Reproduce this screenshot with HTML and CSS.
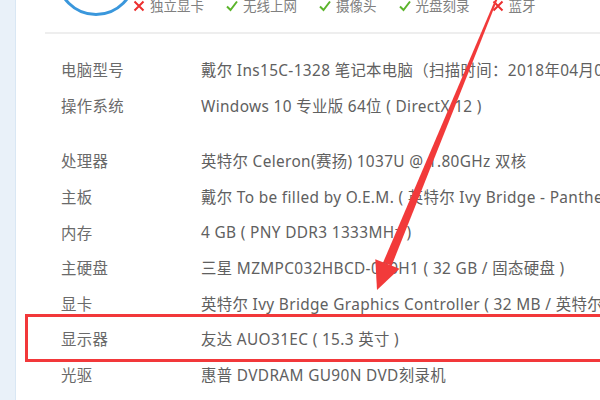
FILE: index.html
```html
<!DOCTYPE html>
<html lang="zh-CN">
<head>
<meta charset="utf-8">
<link rel="stylesheet" href="styles.css">
</head>
<body>
<div class="page">
  <aside class="side"></aside>
  <main class="main">
    <header class="head">
      <div class="logo"></div>
      <ul class="feats">
        <li class="feat"><svg class="ico" viewBox="0 0 12 12"><path d="M1.5 1.5 L10.5 10.5 M10.5 1.5 L1.5 10.5" class="x"/></svg>独立显卡</li>
        <li class="feat"><svg class="ico" viewBox="0 0 12 12"><path d="M1 6.5 L4.5 10 L11 1.5" class="ok"/></svg>无线上网</li>
        <li class="feat"><svg class="ico" viewBox="0 0 12 12"><path d="M1 6.5 L4.5 10 L11 1.5" class="ok"/></svg>摄像头</li>
        <li class="feat"><svg class="ico" viewBox="0 0 12 12"><path d="M1 6.5 L4.5 10 L11 1.5" class="ok"/></svg>光盘刻录</li>
        <li class="feat"><svg class="ico" viewBox="0 0 12 12"><path d="M1.5 1.5 L10.5 10.5 M10.5 1.5 L1.5 10.5" class="x"/></svg>蓝牙</li>
      </ul>
    </header>
    <div class="divider"></div>
    <section class="group g1">
      <div class="row"><span class="lbl">电脑型号</span><span class="val">戴尔 Ins15C-1328 笔记本电脑（扫描时间：2018年04月04日）</span></div>
      <div class="row"><span class="lbl">操作系统</span><span class="val">Windows 10 专业版 64位 ( DirectX 12 )</span></div>
    </section>
    <section class="group g2">
      <div class="row"><span class="lbl">处理器</span><span class="val">英特尔 Celeron(赛扬) 1037U @ 1.80GHz 双核</span></div>
      <div class="row"><span class="lbl">主板</span><span class="val">戴尔 To be filled by O.E.M. ( 英特尔 Ivy Bridge - Panther Point 家族 )</span></div>
      <div class="row"><span class="lbl">内存</span><span class="val">4 GB ( PNY DDR3 1333MHz )</span></div>
      <div class="row"><span class="lbl">主硬盘</span><span class="val">三星 MZMPC032HBCD-000H1 ( 32 GB / 固态硬盘 )</span></div>
      <div class="row"><span class="lbl">显卡</span><span class="val">英特尔 Ivy Bridge Graphics Controller ( 32 MB / 英特尔 )</span></div>
      <div class="row hl"><span class="box"></span><span class="lbl">显示器</span><span class="val">友达 AUO31EC ( 15.3 英寸 )</span></div>
      <div class="row"><span class="lbl">光驱</span><span class="val">惠普 DVDRAM GU90N DVD刻录机</span></div>
    </section>
  </main>
  <svg class="arrow" viewBox="0 0 600 400">
    <polygon points="496.1,-2.4 497.9,-1.6 391.6,265.7 383.2,262.3"/>
    <polygon points="375.3,259.2 399.5,268.8 377,290"/>
  </svg>
</div>
</body>
</html>
```
FILE: styles.css
```css
html, body {
  margin: 0;
  padding: 0;
  background: #fff;
}
body {
  width: 600px;
  height: 400px;
  overflow: hidden;
  font-family: "Noto Sans", "Noto Sans CJK SC", sans-serif;
  font-size: 15.4px;
  letter-spacing: 0.35px;
  color: #666;
}
.page {
  position: relative;
  display: flex;
  width: 600px;
  height: 400px;
  overflow: hidden;
}
.side {
  width: 15px;
  flex: none;
  background: #e9f1f9;
  border-right: 1px solid #d9e7f4;
}
.main {
  flex: 1;
  min-width: 0;
}
.head {
  display: flex;
  align-items: flex-start;
  height: 32px;
}
.logo {
  box-sizing: border-box;
  width: 80px;
  height: 80px;
  margin: -64px 0 0 40px;
  border: 3px solid #3a97dc;
  border-radius: 50%;
  flex: none;
}
.feats {
  list-style: none;
  margin: -4px 0 0 -3px;
  padding: 0;
  display: flex;
  gap: 22px;
  white-space: nowrap;
  color: #808080;
  font-size: 13.5px;
  letter-spacing: 0;
  line-height: 20px;
}
.feat {
  display: flex;
  align-items: center;
  gap: 5px;
}
.ico {
  width: 12px;
  height: 12px;
}
.ico .x {
  stroke: #ec2f2f;
  stroke-width: 2;
  fill: none;
}
.ico .ok {
  stroke: #5bb42a;
  stroke-width: 2;
  fill: none;
}
.divider {
  height: 2px;
  margin-left: 29px;
  background: #eeeeee;
}
.group {
  display: flex;
  flex-direction: column;
}
.g1 {
  padding-top: 18px;
}
.g2 {
  padding-top: 20px;
}
.row {
  position: relative;
  display: flex;
  align-items: center;
  height: 35.6px;
  padding-left: 45px;
  white-space: nowrap;
}
.lbl {
  width: 140px;
  flex: none;
  color: #6a6a6a;
}
.val {
  color: #606060;
}
.box {
  position: absolute;
  left: 9px;
  right: -20px;
  top: -7px;
  height: 48px;
  box-sizing: border-box;
  border: 3px solid #f2383a;
}
.arrow {
  position: absolute;
  left: 0;
  top: 0;
  width: 600px;
  height: 400px;
  fill: #f23a3a;
  pointer-events: none;
}
```
